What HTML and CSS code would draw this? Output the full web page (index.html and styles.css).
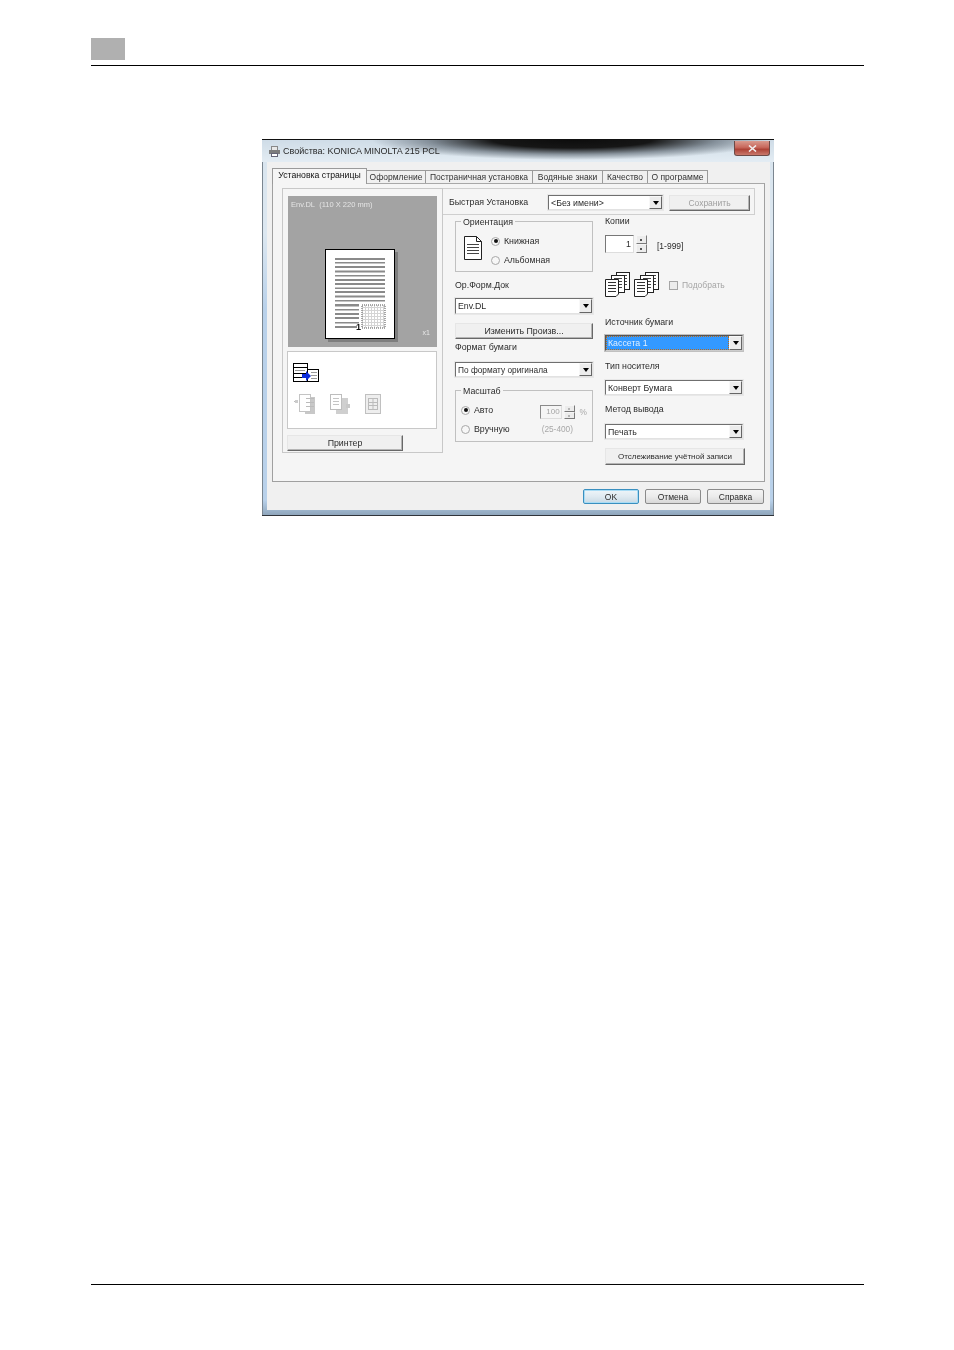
FILE: index.html
```html
<!DOCTYPE html>
<html lang="ru">
<head>
<meta charset="utf-8">
<title>Свойства: KONICA MINOLTA 215 PCL</title>
<link rel="stylesheet" href="styles.css">
</head>
<body>
<div class="page">
  <header class="head"><div class="square"></div></header>
  <div class="dialog">
    <div class="titlebar">
      <svg class="app-icon" width="13" height="13" viewBox="0 0 13 13"><rect x="3.500" y="1.500" width="6" height="4" fill="#e8e8e8" stroke="#888"/><rect x="1" y="5" width="11" height="4" fill="#7d7d7d"/><rect x="3.500" y="8.500" width="6" height="3" fill="#fff" stroke="#667"/></svg>
      <span class="title-text">Свойства: KONICA MINOLTA 215 PCL</span>
      <div class="close"><svg width="9" height="7" viewBox="0 0 9 7"><path d="M1 0.500 L8 6.500 M8 0.500 L1 6.500" stroke="#f2eeee" stroke-width="1.600"/></svg></div>
    </div>
    <div class="client">
      <div class="tabs">
        <div class="tab active w95">Установка страницы</div>
        <div class="tab w59">Оформление</div>
        <div class="tab w107">Постраничная установка</div>
        <div class="tab w70">Водяные знаки</div>
        <div class="tab w45">Качество</div>
        <div class="tab w60">О программе</div>
      </div>
      <div class="panel">
        <section class="left">
          <div class="preview">
            <span class="preview-label">Env.DL&nbsp; (110 X 220 mm)</span>
            <div class="paper">
              <svg width="68" height="88" viewBox="0 0 68 88">
                <defs>
                  <pattern id="dots" width="3" height="3" patternUnits="userSpaceOnUse"><rect width="3" height="3" fill="#fff"/><rect width="1" height="3" fill="#d4d4d4"/><rect width="3" height="1" fill="#d4d4d4"/></pattern>
                </defs>
                <g fill="#8a8a8a">
                  <rect x="9" y="8" width="50" height="2"/><rect x="9" y="12" width="50" height="1.500"/><rect x="9" y="16" width="50" height="2"/><rect x="9" y="20.500" width="50" height="2"/><rect x="9" y="25" width="50" height="1.500"/><rect x="9" y="29" width="50" height="2"/><rect x="9" y="33" width="50" height="2"/><rect x="9" y="37.500" width="50" height="1.500"/><rect x="9" y="41" width="50" height="2"/><rect x="9" y="45.500" width="50" height="2"/><rect x="9" y="50" width="50" height="1.500"/>
                  <rect x="9" y="54" width="24" height="2.500"/><rect x="9" y="59" width="24" height="1.500"/><rect x="9" y="63" width="24" height="2"/><rect x="9" y="67" width="24" height="2"/><rect x="9" y="72" width="24" height="1.500"/><rect x="9" y="76" width="22" height="2"/>
                </g>
                <rect x="36" y="55" width="23" height="23" fill="url(#dots)" stroke="#8a8a8a" stroke-width="1.500" stroke-dasharray="1 1"/>
                <text x="35" y="80" class="page-num">1</text>
              </svg>
            </div>
            <span class="zoom-label">x1</span>
          </div>
          <div class="icons-box">
            <svg class="layout-icon" width="26" height="20" viewBox="0 0 26 20">
              <rect x="0.500" y="0.500" width="14" height="18" fill="#fff" stroke="#000"/>
              <path d="M1 4.500 H14 M1 10.500 H14 M1 14.500 H14" stroke="#000"/>
              <path d="M2 7.500 H12" stroke="#999"/>
              <rect x="14.500" y="6.500" width="11" height="12" fill="#fff" stroke="#000"/>
              <path d="M18 9.500 H24 M18 12.500 H24 M18 15.500 H24" stroke="#999"/>
              <path d="M9 11 H13 V8 L18 13 L13 18 V15 H9 Z" fill="#0b2bdc"/>
            </svg>
            <div class="gray-icons">
              <svg width="22" height="21" viewBox="0 0 22 21"><rect x="11" y="3" width="10" height="17" fill="#c8c8c8"/><rect x="5.500" y="0.500" width="11" height="17" fill="#fff" stroke="#c4c4c4"/><path d="M12 4.500 H20 M12 8.500 H20 M12 12.500 H20" stroke="#bbb"/><path d="M0 7.500 H4" stroke="#bbb"/><rect x="1" y="6" width="3" height="3" fill="#ccc"/></svg>
              <svg width="21" height="21" viewBox="0 0 21 21"><rect x="6" y="4" width="12" height="16" fill="#cfcfcf"/><rect x="0.500" y="0.500" width="11" height="15" fill="#fff" stroke="#bdbdbd"/><path d="M3 4.500 H9 M3 7.500 H9 M3 10.500 H9" stroke="#c4c4c4"/><rect x="16" y="10" width="4" height="4" fill="#c8c8c8"/></svg>
              <svg width="16" height="20" viewBox="0 0 16 20"><rect x="0.500" y="0.500" width="15" height="19" fill="#eee" stroke="#c0c0c0"/><rect x="3.500" y="4.500" width="9" height="11" fill="none" stroke="#bbb"/><path d="M3 8.500 H13 M3 11.500 H13 M8 4 V16" stroke="#bbb"/></svg>
            </div>
          </div>
          <button class="btn printer-btn">Принтер</button>
        </section>
        <section class="right">
          <div class="quick">
            <span class="quick-label">Быстрая Установка</span>
            <div class="select quick-select"><span>&lt;Без имени&gt;</span><i class="arrow"></i></div>
            <button class="btn save-btn" disabled>Сохранить</button>
          </div>
          <div class="columns">
            <div class="col">
              <div class="group orient">
                <span class="legend">Ориентация</span>
                <svg class="doc-icon" width="18" height="24" viewBox="0 0 18 24"><path d="M0.500 0.500 H12.500 L17.500 5.500 V23.500 H0.500 Z" fill="#fff" stroke="#222"/><path d="M12.500 0.500 V5.500 H17.500" fill="none" stroke="#222"/><path d="M3 8.500 H15 M3 11.500 H15 M3 14.500 H15 M3 17.500 H15" stroke="#444"/></svg>
                <div class="radios">
                  <label class="radio-row"><i class="radio on"></i>Книжная</label>
                  <label class="radio-row"><i class="radio"></i>Альбомная</label>
                </div>
              </div>
              <div class="label m7">Ор.Форм.Док</div>
              <div class="select m7 h16"><span>Env.DL</span><i class="arrow"></i></div>
              <button class="btn wide m9">Изменить Произв...</button>
              <div class="label m2">Формат бумаги</div>
              <div class="select m9"><span class="narrow">По формату оригинала</span><i class="arrow"></i></div>
              <div class="group scale">
                <span class="legend">Масштаб</span>
                <div class="scale-row">
                  <label class="radio-row"><i class="radio on"></i>Авто</label>
                  <div class="scale-value"><span class="disabled-input">100</span><span class="spin small"><i></i><i></i></span><span class="muted">%</span></div>
                </div>
                <div class="scale-row second">
                  <label class="radio-row"><i class="radio"></i>Вручную</label>
                  <span class="muted range">(25-400)</span>
                </div>
              </div>
            </div>
            <div class="col">
              <div class="label">Копии</div>
              <div class="copies">
                <span class="count">1</span>
                <span class="spin"><i></i><i></i></span>
                <span class="range-text">[1-999]</span>
              </div>
              <div class="collate">
                <svg width="26" height="26" viewBox="0 0 26 26">
                  <defs>
                    <g id="stack">
                      <rect x="11.500" y="0.500" width="13" height="17" fill="#fff" stroke="#222"/><path d="M14 3.500 H22 M14 6.500 H22 M14 9.500 H22 M14 12.500 H22" stroke="#444"/>
                      <rect x="6.500" y="3.500" width="13" height="17" fill="#fff" stroke="#222"/><path d="M9 6.500 H17 M9 9.500 H17 M9 12.500 H17 M9 15.500 H17" stroke="#444"/>
                      <path d="M0.500 7.500 H13.500 V22 L11 24.500 H0.500 Z" fill="#fff" stroke="#222"/><path d="M3 10.500 H11 M3 13.500 H11 M3 16.500 H11 M3 19.500 H11" stroke="#333"/>
                    </g>
                  </defs>
                  <use href="#stack"/>
                </svg>
                <svg width="26" height="26" viewBox="0 0 26 26"><use href="#stack"/></svg>
                <label class="check-row"><i class="check"></i>Подобрать</label>
              </div>
              <div class="label m18">Источник бумаги</div>
              <div class="select m7 h16 selected"><span>Кассета 1</span><i class="arrow"></i></div>
              <div class="label m9">Тип носителя</div>
              <div class="select m8"><span>Конверт Бумага</span><i class="arrow"></i></div>
              <div class="label m8">Метод вывода</div>
              <div class="select m9"><span>Печать</span><i class="arrow"></i></div>
              <button class="btn track m9">Отслеживание учётной записи</button>
            </div>
          </div>
        </section>
      </div>
      <div class="actions">
        <button class="dlg-btn default">OK</button>
        <button class="dlg-btn">Отмена</button>
        <button class="dlg-btn">Справка</button>
      </div>
    </div>
  </div>
  <div class="foot-line"></div>
</div>
</body>
</html>
```
FILE: styles.css
```css
* { box-sizing: border-box; }
html, body { margin: 0; padding: 0; background: #fff; }
.page { width: 954px; height: 1350px; padding: 38px 0 0 91px; display: flex; flex-direction: column; }
.head { width: 773px; height: 28px; border-bottom: 1px solid #000; flex: none; }
.square { width: 34px; height: 22px; background: #b0b0b0; }
.foot-line { width: 773px; height: 1px; background: #000; margin-top: 768px; flex: none; }

.dialog {
  width: 512px; height: 377px; margin: 73px 0 0 171px; flex: none;
  font: 8.800px/12px "Liberation Sans", Arial, sans-serif; color: #2c2c2c;
  background: linear-gradient(180deg, #d8e4ee 0, #dce7f0 25%, #b9d1ea 45%, #b9d1ea 96%, #8fa6bc 100%);
  border-top: 1px solid #111; border-bottom: 1px solid #30343a;
  box-shadow: inset 1px 0 0 #7b8690, inset -1px 0 0 #7b8690;
  filter: blur(0.35px);
  display: flex; flex-direction: column;
}
.titlebar {
  height: 22px; flex: none; display: flex; align-items: center; padding: 0 4px 0 6px;
  background:
    radial-gradient(ellipse 200px 20px at 310px 0, #0d0d0d 0, #161616 40%, rgba(70,80,90,.55) 72%, rgba(70,80,90,0) 100%),
    linear-gradient(180deg, #cfdce7, #e3ecf3);
}
.app-icon { flex: none; margin-right: 2px; }
.title-text { font-size: 9px; color: #2a2a2a; }
.close {
  margin-left: auto; width: 36px; height: 15px; margin-top: -5px; display: flex; align-items: center; justify-content: center;
  background: linear-gradient(180deg, #d99a8e 0, #c8685c 45%, #ad4337 60%, #c9796c 100%);
  border: 1px solid #6d4a47; border-top: 0; border-radius: 0 0 3px 3px;
}

.client { width: 503px; height: 348px; margin-left: 5px; background: #f0f0f0; padding: 6px 0 0 5px; flex: none; }
.tabs { display: flex; align-items: flex-end; height: 15px; position: relative; z-index: 1; }
.tab {
  height: 13px; line-height: 12px; font-size: 8.500px; text-align: center; white-space: nowrap;
  border: 1px solid #9a9a9a; border-bottom: 0; border-left-width: 0; background: #f0f0f0; color: #333; flex: none;
}
.tab.active { height: 16px; margin-bottom: -1px; border-left-width: 1px; background: #f5f5f5; font-size: 8.700px; color: #111; }
.w95 { width: 95px; } .w59 { width: 59px; } .w107 { width: 107px; } .w70 { width: 70px; } .w45 { width: 45px; } .w60 { width: 60px; }
.panel {
  width: 493px; height: 299px; border: 1px solid #a0a0a0; border-top-color: #a8a8a8; background: #f5f5f5;
  padding: 4px 0 0 9px; display: flex; align-items: flex-start;
}
.left {
  width: 161px; height: 265px; border: 1px solid #c8c8c8; padding: 7px 0 0 5px; flex: none;
}
.preview { width: 149px; height: 151px; background: #a3a3a3; padding: 53px 0 0 37px; position: relative; }
.preview-label { position: absolute; left: 3px; top: 3px; font-size: 7.500px; color: #e4e4e4; white-space: nowrap; }
.zoom-label { position: absolute; right: 7px; bottom: 8px; font-size: 7px; color: #e8e8e8; }
.paper { width: 70px; height: 90px; background: #fff; border: 1px solid #000; box-shadow: 3px 3px 0 #7e7e7e; }
.paper svg { display: block; }
.page-num { font: bold 9px "Liberation Sans", Arial, sans-serif; fill: #111; text-anchor: end; }
.icons-box { width: 150px; height: 78px; margin: 4px 0 0 -1px; background: #fff; border: 1px solid #c8c8c8; padding: 11px 0 0 5px; }
.layout-icon { display: block; }
.gray-icons { display: flex; align-items: flex-start; gap: 14px; margin: 11px 0 0 1px; }
.gray-icons svg { display: block; flex: none; }

.btn {
  font: 8.800px/12px "Liberation Sans", Arial, sans-serif; color: #2c2c2c; background: #f0f0f0; padding: 0;
  border: 1px solid; border-color: #e6e6e6 #686868 #686868 #e6e6e6; display: block; white-space: nowrap;
  box-shadow: inset -1px -1px 0 #b5b5b5;
}
.btn[disabled] { color: #a0a0a0; }
.printer-btn { width: 116px; height: 16px; margin: 6px 0 0 -1px; }

.right { width: 312px; flex: none; }
.quick {
  height: 27px; border: 1px solid #cfcfcf; border-left: 0; display: flex; align-items: center; padding: 2px 5px 0 6px;
}
.quick-label { width: 99px; flex: none; white-space: nowrap; margin-top: -2px; }
.quick .quick-select { width: 115px; flex: none; }
.save-btn { width: 81px; height: 16px; margin-left: 6px; flex: none; font-size: 8.500px; }

.columns { display: flex; gap: 12px; padding-left: 12px; }
.col { width: 138px; flex: none; }
.col + .col { width: 140px; }
.label { height: 12px; white-space: nowrap; }
.m2 { margin-top: 2px; } .m7 { margin-top: 7px; } .m8 { margin-top: 8px; } .m9 { margin-top: 9px; } .m18 { margin-top: 18px; }

.select {
  width: 138px; height: 15px; background: #fff; border: 1px solid; border-color: #6f6f6f #e2e2e2 #e2e2e2 #6f6f6f;
  box-shadow: 0 0 0 1px #e8e8e8; display: flex; align-items: center; padding-left: 2px; position: relative; white-space: nowrap; color: #2c2c2c;
}
.select span { flex: 1; }
.select .narrow { font-size: 8.300px; }
.h16 { height: 16px; }
.arrow { width: 13px; align-self: stretch; background: #ececec; border: 1px solid; border-color: #f8f8f8 #666 #666 #f8f8f8; position: relative; flex: none; }
.arrow::after {
  content: ""; position: absolute; left: 3px; top: 4px; border: 3.500px solid transparent; border-top: 4px solid #000; border-bottom: 0;
}
.selected { border-color: #555 #ccc #ccc #555; box-shadow: 0 0 0 1px #c0c0c0; }
.selected span { background: #3399ff; color: #dfefff; align-self: stretch; line-height: 14px; outline: 1px dotted #b86a1a; outline-offset: -1px; padding-left: 2px; margin-left: -2px; }

.group { border: 1px solid #c0c0c0; position: relative; width: 138px; }
.legend { position: absolute; left: 5px; top: -6px; background: #f5f5f5; padding: 0 2px; white-space: nowrap; }
.orient { height: 51px; margin-top: 6px; padding: 13px 0 0 8px; display: flex; gap: 9px; }
.doc-icon { display: block; flex: none; margin-top: 1px; }
.radios { display: flex; flex-direction: column; gap: 7px; }
.radio-row { display: flex; align-items: center; gap: 4px; height: 12px; white-space: nowrap; }
.radio { width: 9px; height: 9px; border-radius: 50%; border: 1px solid #a8a8a8; background: #f7f7f7; display: block; position: relative; flex: none; }
.radio.on::after { content: ""; position: absolute; left: 1.500px; top: 1.500px; width: 4px; height: 4px; border-radius: 50%; background: #111; }
.scale { height: 52px; margin-top: 13px; padding: 13px 0 0 5px; }
.scale-row { display: flex; align-items: center; justify-content: space-between; height: 12px; }
.scale-row.second { margin-top: 7px; padding-right: 19px; }
.scale-value { display: flex; align-items: center; gap: 2px; padding-right: 5px; margin-top: 4px; }
.disabled-input { width: 22px; height: 14px; border: 1px solid; border-color: #8a8a8a #ddd #ddd #8a8a8a; text-align: right; padding-right: 1px; color: #a5a5a5; font-size: 8px; }
.muted { color: #a8a8a8; font-size: 8.300px; }
.scale-value .muted { margin-left: 3px; }
.spin { width: 11px; height: 18px; display: flex; flex-direction: column; flex: none; }
.spin i { flex: 1; background: #ececec; border: 1px solid; border-color: #f6f6f6 #7a7a7a #7a7a7a #f6f6f6; position: relative; }
.spin i::after { content: ""; position: absolute; left: 3px; top: 3px; width: 2px; height: 2px; background: #555; }
.spin.small i::after { background: #b5b5b5; top: 2px; }
.spin.small { height: 14px; }
.copies { display: flex; align-items: center; height: 18px; margin-top: 8px; }
.count { width: 29px; height: 18px; border: 1px solid; border-color: #777 #ddd #ddd #777; background: #fff; text-align: right; padding-right: 2px; line-height: 16px; margin-right: 2px; }
.range-text { margin: 3px 0 0 10px; font-size: 8.500px; }
.collate { display: flex; align-items: center; gap: 3px; height: 26px; margin-top: 19px; }
.collate svg { display: block; flex: none; }
.check-row { display: flex; align-items: center; gap: 4px; color: #a5a5a5; margin-left: 6px; white-space: nowrap; font-size: 8.500px; }
.check { width: 9px; height: 9px; border: 1px solid #a5a5a5; background: #ececec; display: block; }
.track { width: 140px; height: 17px; font-size: 8px; }
.wide { width: 138px; height: 16px; }

.actions { display: flex; gap: 6px; justify-content: flex-end; padding: 7px 6px 0 0; }
.dlg-btn {
  width: 56px; height: 15px; padding: 0; font: 8.500px/12px "Liberation Sans", Arial, sans-serif; color: #2c2c2c;
  border: 1px solid #8a8a8a; border-radius: 2px; background: linear-gradient(180deg, #f4f4f4, #ebebeb 50%, #d8d8d8);
}
.dlg-btn:last-child { width: 57px; }
.dlg-btn.default { border-color: #3a8fbf; box-shadow: inset 0 0 0 1px #a8dcf5; background: linear-gradient(180deg, #eef5f9, #dfeaf1 50%, #c9d9e4); }
```
